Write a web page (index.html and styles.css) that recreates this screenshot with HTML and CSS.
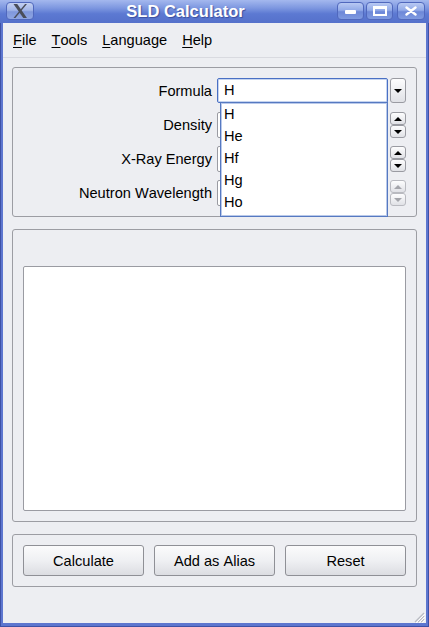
FILE: index.html
```html
<!DOCTYPE html>
<html>
<head>
<meta charset="utf-8">
<link rel="stylesheet" href="styles.css">
</head>
<body>
<div class="window">
  <div class="titlebar">
    <div class="tbtn logo">
      <svg width="28" height="18" viewBox="0 0 28 18">
        <path d="M7 1.5 L11 1.5 L21.5 16.5 L17.5 16.5 Z" fill="#4a4e5a"/>
        <path d="M19.5 1.5 L21.5 1.5 L9 16.5 L7 16.5 Z" fill="#4a4e5a"/>
      </svg>
    </div>
    <div class="title">SLD Calculator</div>
    <div class="tbtns">
      <div class="tbtn"><span class="ic-min"></span></div>
      <div class="tbtn"><span class="ic-max"></span></div>
      <div class="tbtn close">
        <svg width="12" height="10" viewBox="0 0 12 10"><path d="M1.5 1.5 L10.5 8.5 M10.5 1.5 L1.5 8.5" stroke="#fff" stroke-width="2.4" stroke-linecap="round"/></svg>
      </div>
    </div>
  </div>
  <div class="client">
    <div class="menubar">
      <span class="mi"><u>F</u>ile</span>
      <span class="mi"><u>T</u>ools</span>
      <span class="mi"><u>L</u>anguage</span>
      <span class="mi"><u>H</u>elp</span>
    </div>
    <div class="content">
      <div class="group form">
        <label class="lbl">Formula</label>
        <div class="field">
          <div class="edit focus">H</div>
          <div class="combo-btn"><span class="tri down"></span></div>
        </div>
        <label class="lbl">Density</label>
        <div class="field">
          <div class="edit"></div>
          <div class="spin"><div class="sb"><span class="tri up"></span></div><div class="sb"><span class="tri down"></span></div></div>
        </div>
        <label class="lbl">X-Ray Energy</label>
        <div class="field">
          <div class="edit"></div>
          <div class="spin"><div class="sb"><span class="tri up"></span></div><div class="sb"><span class="tri down"></span></div></div>
        </div>
        <label class="lbl">Neutron Wavelength</label>
        <div class="field">
          <div class="edit"></div>
          <div class="spin dis"><div class="sb"><span class="tri up"></span></div><div class="sb"><span class="tri down"></span></div></div>
        </div>
      </div>
      <div class="group output">
        <div class="textarea"></div>
      </div>
      <div class="group actions">
        <button class="btn">Calculate</button>
        <button class="btn">Add as Alias</button>
        <button class="btn">Reset</button>
      </div>
    </div>
    <div class="popup">
      <div class="item">H</div>
      <div class="item">He</div>
      <div class="item">Hf</div>
      <div class="item">Hg</div>
      <div class="item">Ho</div>
    </div>
    <svg class="grip" width="12" height="12" viewBox="0 0 12 12">
      <path d="M11 2 L2 11 M11 5 L5 11 M11 8 L8 11" stroke="#b9bbc3" stroke-width="1.2"/>
      <path d="M12 3 L3 12 M12 6 L6 12 M12 9 L9 12" stroke="#ffffff" stroke-width="1"/>
    </svg>
  </div>
</div>
</body>
</html>
```

FILE: styles.css
```css
html, body {
  margin: 0;
  padding: 0;
}
body {
  width: 429px;
  height: 627px;
  overflow: hidden;
  font-family: "Liberation Sans", Arial, sans-serif;
  font-size: 14.6px;
  font-kerning: none;
  color: #000;
}
.window {
  box-sizing: border-box;
  width: 429px;
  height: 627px;
  display: flex;
  flex-direction: column;
  background: #5d76cf;
  border: 1px solid #3e51a6;
  border-top: none;
}
.titlebar {
  height: 23px;
  flex: none;
  display: flex;
  align-items: flex-start;
  margin: 0 -1px;
  background: linear-gradient(#a4b8ee 0%, #7d97e0 35%, #5c79d2 60%, #5571cb 100%);
}
.tbtn {
  box-sizing: border-box;
  height: 18px;
  width: 27px;
  margin-top: 2px;
  border: 1px solid #5068bd;
  border-radius: 4px;
  background: linear-gradient(#b8c9f3 0%, #92aae8 45%, #6d88d8 55%, #7f9ae0 100%);
  display: flex;
  align-items: center;
  justify-content: center;
}
.tbtn.logo {
  margin-left: 6px;
  width: 28px;
  background: linear-gradient(#c3d0f2 0%, #a2b5e8 45%, #7f97dc 55%, #8ea5e2 100%);
}
.title {
  flex: 1;
  text-align: center;
  color: #fff;
  font-weight: bold;
  font-size: 16.5px;
  line-height: 22px;
  text-shadow: 1px 1px 1px #3b4f9e;
}
.tbtns {
  display: flex;
  gap: 2px;
  margin-right: 4px;
}
.tbtn.close {
  margin-left: 2px;
  width: 28px;
}
.ic-min {
  display: block;
  width: 11px;
  height: 4px;
  background: #fff;
  border-radius: 1px;
  margin-top: 2px;
}
.ic-max {
  display: block;
  box-sizing: border-box;
  width: 14px;
  height: 10px;
  border: 2px solid #fff;
  border-top-width: 3px;
}
.client {
  position: relative;
  flex: 1;
  margin: 0 2px 3px 2px;
  background: #edeef2;
  display: flex;
  flex-direction: column;
}
.menubar {
  height: 34px;
  line-height: 34px;
  padding-left: 2.5px;
  display: flex;
  border-bottom: 1px solid #d9dae0;
}
.mi {
  padding: 0 7.5px;
}
.mi u {
  text-decoration: underline;
  text-decoration-thickness: 1px;
  text-underline-offset: 2px;
}
.content {
  padding: 9px 9px 0 9px;
  display: flex;
  flex-direction: column;
  gap: 12px;
}
.group {
  box-sizing: border-box;
  border: 1px solid #9c9da3;
  border-radius: 3px;
}
.form {
  height: 150px;
  padding: 10px 10px 10px 10px;
  display: grid;
  grid-template-columns: 1fr 189px;
  grid-auto-rows: 26px;
  column-gap: 5px;
  row-gap: 8px;
  align-items: center;
}
.lbl {
  text-align: right;
  line-height: 26px;
}
.field {
  display: flex;
  gap: 2px;
  height: 26px;
}
.edit {
  box-sizing: border-box;
  flex: 1;
  background: #fff;
  border: 1px solid #9a9ba2;
  border-radius: 2px;
  padding-left: 6px;
  line-height: 23px;
}
.edit.focus {
  border: 1px solid #4a70c4;
  box-shadow: inset 0 0 0 1px #c5d4f0;
  height: 25px;
}
.combo-btn, .sb {
  box-sizing: border-box;
  border: 1px solid #9a9ba2;
  border-radius: 3px;
  background: linear-gradient(#fdfdfe, #e0e1e6);
  display: flex;
  align-items: center;
  justify-content: center;
}
.combo-btn {
  width: 16px;
  height: 25px;
}
.spin {
  width: 16px;
  display: flex;
  flex-direction: column;
}
.sb {
  height: 13px;
}
.tri {
  width: 0;
  height: 0;
  border-left: 4px solid transparent;
  border-right: 4px solid transparent;
}
.tri.down {
  border-top: 4px solid #000;
}
.tri.up {
  border-bottom: 4px solid #000;
}
.spin.dis .tri.down {
  border-top-color: #a4a5ab;
}
.spin.dis .tri.up {
  border-bottom-color: #a4a5ab;
}
.spin.dis .sb {
  border-color: #b9bac0;
}
.output {
  height: 293px;
  padding: 36px 10px 10px 10px;
  display: flex;
}
.textarea {
  box-sizing: border-box;
  flex: 1;
  background: #fff;
  border: 1px solid #9a9ba2;
  border-radius: 2px;
}
.actions {
  height: 53px;
  padding: 10px 10px 10px 10px;
  display: flex;
  gap: 10px;
}
.btn {
  box-sizing: border-box;
  width: 121px;
  height: 31px;
  margin: 0;
  padding: 0;
  font-family: "Liberation Sans", Arial, sans-serif;
  font-size: 14.6px;
  font-kerning: none;
  color: #000;
  background: linear-gradient(#fbfbfc 0%, #eff0f3 50%, #dcdde2 100%);
  border: 1px solid #8f9096;
  border-radius: 3px;
}
.popup {
  position: absolute;
  left: 217px;
  top: 79px;
  box-sizing: border-box;
  width: 168px;
  height: 115px;
  background: #fff;
  border: 1px solid #5679c1;
  box-shadow: inset 0 0 0 1px #b9c9ea;
}
.item {
  height: 22px;
  line-height: 22px;
  padding-left: 3px;
}
.grip {
  position: absolute;
  right: 1px;
  bottom: 0;
}
```
